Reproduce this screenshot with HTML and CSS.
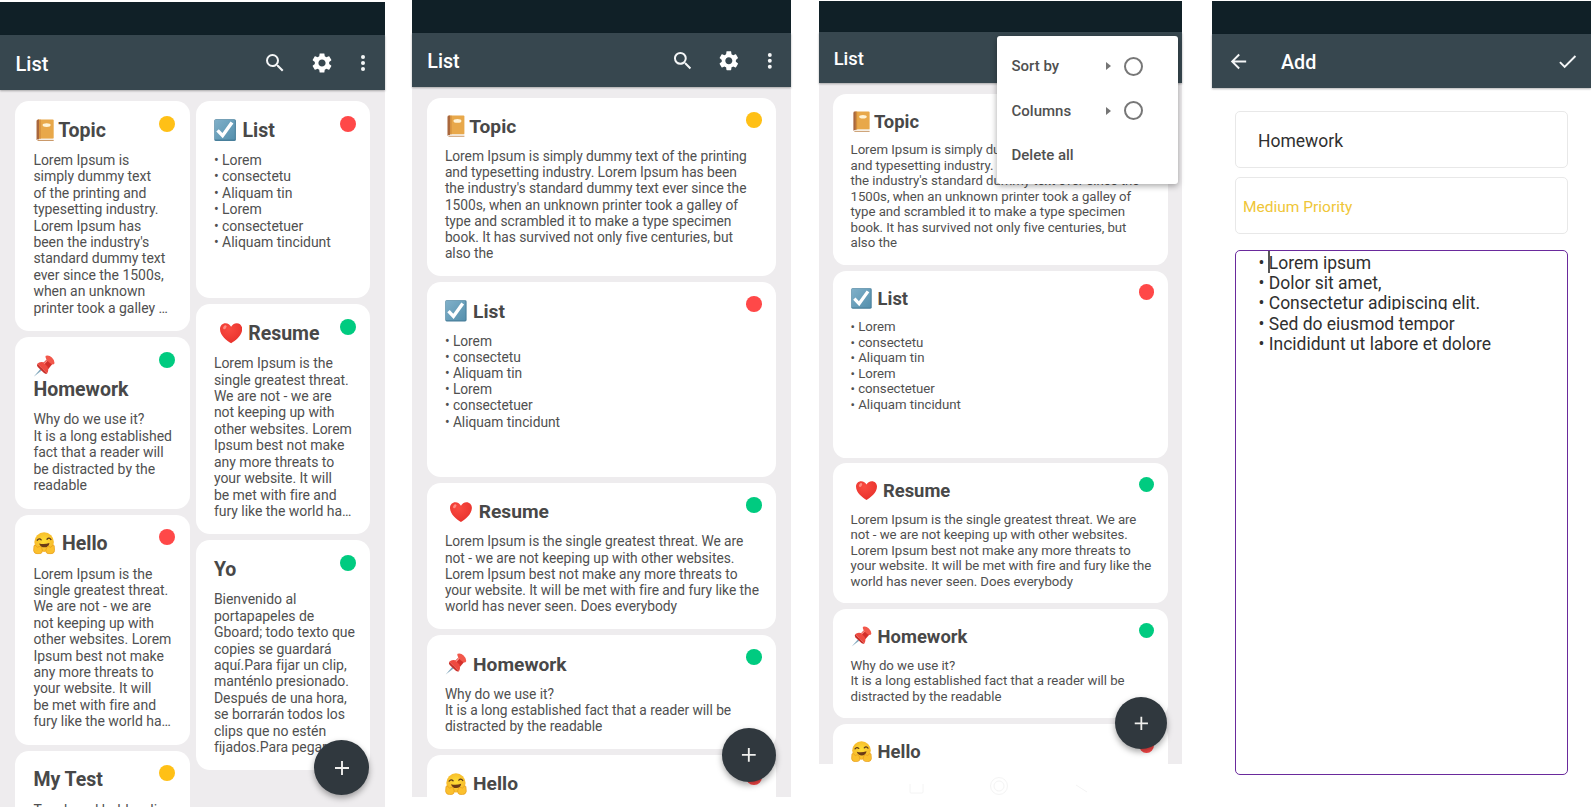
FILE: index.html
```
<!DOCTYPE html>
<html lang="en">
<head>
<meta charset="utf-8">
<title>Notes</title>
<link rel="stylesheet" href="styles.css">
</head>
<body>
<svg class="defs" aria-hidden="true">
<defs>
<linearGradient id="gCheck" x1="0" y1="0" x2="1" y2="1"><stop offset="0" stop-color="#80b0c9"/><stop offset="1" stop-color="#5590ad"/></linearGradient>
<radialGradient id="gFace" cx=".5" cy=".45" r=".6"><stop offset="0" stop-color="#ffdf35"/><stop offset="1" stop-color="#f5b32a"/></radialGradient>
<radialGradient id="gHeart" cx=".4" cy=".3" r=".8"><stop offset="0" stop-color="#fa4b41"/><stop offset="1" stop-color="#e62f2a"/></radialGradient>
</defs>
<symbol id="book" viewBox="0 0 22 22"><path d="M4 .5h14.500q1 0 1 1v17q0 1-1 1H4z" fill="#e8a84a"/><path d="M4 19.500h15.500v1.500H4z" fill="#f5efe6"/><path d="M3.500 21h16v.7h-16z" fill="#b8793a"/><path d="M2.500 2q0-1.500 1.500-1.500h1v19.500q-2.500 0-2.500 1z" fill="#a9673c"/><path d="M5.500 .5h.9v19.200h-.9z" fill="#c98036"/><ellipse cx="12.500" cy="6" rx="4" ry="1.900" fill="#fff3d6"/></symbol>
<symbol id="check" viewBox="0 0 22 22"><rect x=".3" y=".3" width="21.400" height="21.400" rx="1.500" fill="#487f9b"/><rect x=".8" y=".8" width="19.800" height="19.600" rx="1" fill="url(#gCheck)"/><path d="M3.500 11.200l5 5.300L17.800 3.500" fill="none" stroke="#fff" stroke-width="3.400"/></symbol>
<symbol id="heart" viewBox="0 0 22 22"><path d="M11 21C7 18.600 0 13.500 0 6.900 0 3.500 2.500 1.200 5.400 1.200c2.500 0 4.600 1.500 5.600 3.600 1-2.100 3.100-3.600 5.600-3.600 2.900 0 5.400 2.300 5.400 5.700 0 6.600-7 11.700-11 14.100z" fill="url(#gHeart)"/><ellipse cx="4.800" cy="5.200" rx="1.400" ry="2.200" transform="rotate(35 4.800 5.200)" fill="#ff8a80"/></symbol>
<symbol id="pin" viewBox="0 0 22 22"><path d="M8.500 12.500L.7 21.600l9.500-7.400z" fill="#84a9bd"/><path d="M10 8l5-5 5 5-5 6z" fill="#d32f2a"/><path d="M4.300 8.700q2.200-2.300 6-1.400l3.900 4q1.900 3.300-.2 7.100z" fill="#ee4a40"/><path d="M4.300 8.700l9.700 9.700q-1.500.8-3.100-.5L4.700 12q-1.300-1.600-.4-3.300z" fill="#c92d27"/><path d="M12.700.8q3-1.200 6 1.700t2.500 6q-1.500 2.500-5.700-1.500T12.700.8z" fill="#f2584b"/><path d="M11 8.500l3.200-3.200" stroke="#ff9388" stroke-width="1.200"/></symbol>
<symbol id="hug" viewBox="0 0 22 22"><circle cx="11" cy="10" r="9.700" fill="url(#gFace)"/><path d="M4.200 8.200q2-2.500 3.900-.4M13.900 7.200q2-2.300 3.900.3" stroke="#5b3a1a" stroke-width="1.300" fill="none" stroke-linecap="round"/><path d="M6 11.300q5.200 1.300 10.300-.5-.7 4.300-5 4.400-3.800 0-5.300-3.900z" fill="#6b3b16"/><path d="M1 13.500q1-1.200 2 .3l1.500 1.400q3-2 4 .5 1.500 2.200.3 4.800-1.200 1.300-4.300 1.200Q1 21.500.6 18.500zM21 13.500q-1-1.200-2 .3l-1.500 1.400q-3-2-4 .5-1.500 2.200-.3 4.800 1.200 1.300 4.300 1.200 3.500-.2 3.900-3.200z" fill="#fbc02d" stroke="#e59b1c" stroke-width=".7"/></symbol>
<symbol id="search" viewBox="0 0 24 24"><path d="M15.500 14h-.79l-.28-.27A6.471 6.471 0 0 0 16 9.500 6.500 6.500 0 1 0 9.500 16c1.610 0 3.090-.59 4.230-1.570l.27.28v.79l5 4.990L20.490 19l-4.990-5zm-6 0C7.010 14 5 11.990 5 9.500S7.010 5 9.500 5 14 7.010 14 9.500 11.990 14 9.500 14z" fill="#f4f6f7"/></symbol>
<symbol id="gear" viewBox="0 0 24 24"><path d="M19.140 12.940c.04-.3.060-.61.060-.94 0-.32-.02-.64-.07-.94l2.030-1.580c.18-.14.23-.41.120-.61l-1.920-3.320c-.12-.22-.37-.29-.59-.22l-2.390.96c-.5-.38-1.030-.7-1.620-.94l-.36-2.540c-.04-.24-.24-.41-.48-.41h-3.840c-.24 0-.43.17-.47.41l-.36 2.540c-.59.24-1.130.57-1.620.94l-2.390-.96c-.22-.08-.47 0-.59.22L2.740 8.870c-.12.21-.08.47.12.61l2.030 1.580c-.05.3-.09.63-.09.94s.02.64.07.94l-2.030 1.580c-.18.14-.23.41-.12.61l1.920 3.320c.12.220.37.290.59.220l2.390-.96c.5.38 1.030.7 1.620.94l.36 2.540c.05.24.24.410.48.410h3.840c.24 0 .44-.17.47-.41l.36-2.540c.59-.24 1.130-.56 1.620-.94l2.390.96c.22.080.47 0 .59-.22l1.920-3.320c.12-.22.070-.47-.12-.61l-2.010-1.580zM12 15.600c-1.980 0-3.600-1.620-3.600-3.600s1.620-3.600 3.600-3.600 3.600 1.620 3.600 3.600-1.620 3.600-3.600 3.600z" fill="#fff"/></symbol>
<symbol id="more" viewBox="0 0 24 24"><g fill="#f4f6f7"><circle cx="12" cy="6" r="2"/><circle cx="12" cy="12" r="2"/><circle cx="12" cy="18" r="2"/></g></symbol>
<symbol id="plus" viewBox="0 0 24 24"><path d="M12 5v14M5 12h14" stroke="#f0f0ee" stroke-width="1.900"/></symbol>
</svg>

<main class="board">
<section class="phone p1">
  <div class="status"></div>
  <header class="bar"><h1>List</h1><svg class="ic s"><use href="#search"/></svg><svg class="ic g"><use href="#gear"/></svg><svg class="ic m"><use href="#more"/></svg></header>
  <div class="feed two">
    <div class="col">
      <article class="card"><i class="dot amber"></i><h2><svg class="emo bk"><use href="#book"/></svg>Topic</h2><p>Lorem Ipsum is<br>simply dummy text<br>of the printing and<br>typesetting industry.<br>Lorem Ipsum has<br>been the industry's<br>standard dummy text<br>ever since the 1500s,<br>when an unknown<br>printer took a galley …</p></article>
      <article class="card"><i class="dot green"></i><h2><svg class="emo"><use href="#pin"/></svg><br>Homework</h2><p>Why do we use it?<br>It is a long established<br>fact that a reader will<br>be distracted by the<br>readable</p></article>
      <article class="card"><i class="dot red"></i><h2><svg class="emo"><use href="#hug"/></svg> Hello</h2><p>Lorem Ipsum is the<br>single greatest threat.<br>We are not - we are<br>not keeping up with<br>other websites. Lorem<br>Ipsum best not make<br>any more threats to<br>your website. It will<br>be met with fire and<br>fury like the world ha…</p></article>
      <article class="card"><i class="dot amber"></i><h2>My Test</h2><p>Touch and hold a clip</p></article>
    </div>
    <div class="col">
      <article class="card"><i class="dot red"></i><h2><svg class="emo"><use href="#check"/></svg> List</h2><p class="tall">• Lorem<br>• consectetu<br>• Aliquam tin<br>• Lorem<br>• consectetuer<br>• Aliquam tincidunt</p></article>
      <article class="card"><i class="dot green"></i><h2 class="ind"><svg class="emo"><use href="#heart"/></svg> Resume</h2><p>Lorem Ipsum is the<br>single greatest threat.<br>We are not - we are<br>not keeping up with<br>other websites. Lorem<br>Ipsum best not make<br>any more threats to<br>your website. It will<br>be met with fire and<br>fury like the world ha…</p></article>
      <article class="card"><i class="dot green"></i><h2>Yo</h2><p>Bienvenido al<br>portapapeles de<br>Gboard; todo texto que<br>copies se guardará<br>aquí.Para fijar un clip,<br>manténlo presionado.<br>Después de una hora,<br>se borrarán todos los<br>clips que no estén<br>fijados.Para pegar</p></article>
    </div>
  </div>
  <button class="fab"><svg><use href="#plus"/></svg></button>
</section>

<section class="phone p2">
  <div class="status"></div>
  <header class="bar"><h1>List</h1><svg class="ic s"><use href="#search"/></svg><svg class="ic g"><use href="#gear"/></svg><svg class="ic m"><use href="#more"/></svg></header>
  <div class="feed">
    <div class="col">
      <article class="card"><i class="dot amber"></i><h2><svg class="emo bk"><use href="#book"/></svg>Topic</h2><p>Lorem Ipsum is simply dummy text of the printing<br>and typesetting industry. Lorem Ipsum has been<br>the industry's standard dummy text ever since the<br>1500s, when an unknown printer took a galley of<br>type and scrambled it to make a type specimen<br>book. It has survived not only five centuries, but<br>also the</p></article>
      <article class="card"><i class="dot red"></i><h2><svg class="emo"><use href="#check"/></svg> List</h2><p class="tall">• Lorem<br>• consectetu<br>• Aliquam tin<br>• Lorem<br>• consectetuer<br>• Aliquam tincidunt</p></article>
      <article class="card"><i class="dot green"></i><h2 class="ind"><svg class="emo"><use href="#heart"/></svg> Resume</h2><p>Lorem Ipsum is the single greatest threat. We are<br>not - we are not keeping up with other websites.<br>Lorem Ipsum best not make any more threats to<br>your website. It will be met with fire and fury like the<br>world has never seen. Does everybody</p></article>
      <article class="card"><i class="dot green"></i><h2><svg class="emo"><use href="#pin"/></svg> Homework</h2><p>Why do we use it?<br>It is a long established fact that a reader will be<br>distracted by the readable</p></article>
      <article class="card"><i class="dot red"></i><h2><svg class="emo"><use href="#hug"/></svg> Hello</h2></article>
    </div>
  </div>
  <button class="fab"><svg><use href="#plus"/></svg></button>
</section>

<section class="phone p3">
  <div class="status"></div>
  <header class="bar"><h1>List</h1></header>
  <div class="feed">
    <div class="col">
      <article class="card"><h2><svg class="emo bk"><use href="#book"/></svg>Topic</h2><p>Lorem Ipsum is simply dummy text of the printing<br>and typesetting industry. Lorem Ipsum has been<br>the industry's standard dummy text ever since the<br>1500s, when an unknown printer took a galley of<br>type and scrambled it to make a type specimen<br>book. It has survived not only five centuries, but<br>also the</p></article>
      <article class="card"><i class="dot red"></i><h2><svg class="emo"><use href="#check"/></svg> List</h2><p class="tall">• Lorem<br>• consectetu<br>• Aliquam tin<br>• Lorem<br>• consectetuer<br>• Aliquam tincidunt</p></article>
      <article class="card"><i class="dot green"></i><h2 class="ind"><svg class="emo"><use href="#heart"/></svg> Resume</h2><p>Lorem Ipsum is the single greatest threat. We are<br>not - we are not keeping up with other websites.<br>Lorem Ipsum best not make any more threats to<br>your website. It will be met with fire and fury like the<br>world has never seen. Does everybody</p></article>
      <article class="card"><i class="dot green"></i><h2><svg class="emo"><use href="#pin"/></svg> Homework</h2><p>Why do we use it?<br>It is a long established fact that a reader will be<br>distracted by the readable</p></article>
      <article class="card"><i class="dot red"></i><h2><svg class="emo"><use href="#hug"/></svg> Hello</h2></article>
    </div>
  </div>
  <button class="fab"><svg><use href="#plus"/></svg></button>
  <div class="menu">
    <div class="item"><span>Sort by</span><b class="tri"></b><b class="radio"></b></div>
    <div class="item"><span>Columns</span><b class="tri"></b><b class="radio"></b></div>
    <div class="item"><span>Delete all</span></div>
  </div>
  <footer class="nav">
    <svg viewBox="0 0 200 24"><path d="M10 10v8q0 1 1 1h11q1 0 1-1v-8"/><circle cx="99" cy="12" r="8.500"/><circle cx="99" cy="12" r="5"/><path d="M176 11l11 7"/></svg>
  </footer>
</section>

<section class="phone p4">
  <div class="status"></div>
  <header class="bar">
    <svg class="back" viewBox="0 0 24 24"><path d="M20 11H7.830l5.590-5.590L12 4l-8 8 8 8 1.410-1.410L7.830 13H20v-2z" fill="#f4f6f7"/></svg>
    <h1>Add</h1>
    <svg class="ok" viewBox="0 0 24 24"><path d="M9 16.170L4.830 12l-1.420 1.410L9 19 21 7l-1.410-1.410z" fill="#f4f6f7"/></svg>
  </header>
  <form class="form">
    <div class="field name">Homework</div>
    <div class="field prio">Medium Priority</div>
    <div class="area">
      <div class="line">• Lorem ipsum<i class="caret"></i></div>
      <div class="line">• Dolor sit amet,</div>
      <div class="line cut">• Consectetur adipiscing elit.</div>
      <div class="line cut">• Sed do eiusmod tempor</div>
      <div class="line">• Incididunt ut labore et dolore</div>
    </div>
  </form>
</section>
</main>
</body>
</html>
```
FILE: styles.css
```
* { box-sizing: border-box; }
html, body { height: 100%; }
body { margin: 0; background: #fff; font-family: Roboto, "Liberation Sans", sans-serif; overflow: hidden; }
h1, h2, p { margin: 0; }
.defs { position: absolute; width: 0; height: 0; }
.board { display: flex; align-items: flex-start; height: 808px; overflow: hidden; }

.phone { position: relative; flex: none; display: flex; flex-direction: column; }
.p1 { width: 385px; height: 805px; margin-top: 2px; font-size: 10px; }
.p2 { width: 379px; height: 797px; margin-left: 27px; font-size: 9.85px; }
.p3 { width: 363px; height: 807px; margin: 1px 0 0 28px; font-size: 9.45px; }
.p4 { width: 379px; height: 807px; margin: 1px 0 0 30px; font-size: 9.86px; }

.status { flex: none; height: 3.3em; background: #102027; }
.bar { flex: none; display: flex; align-items: center; height: 5.5em; padding: .15em 0 0 1.55em; background: #37474f; box-shadow: 0 1px 2px rgba(0,0,0,.3); position: relative; z-index: 1; }
.bar h1 { flex: 1; padding-top: .05em; font-size: 2em; font-weight: 500; line-height: 1.2; color: #fff; }
.p2 .bar h1, .p4 .bar h1 { padding-top: .13em; }
.ic { width: 2.4em; height: 2.4em; }
.s { margin-right: 2.3em; }
.g { margin-right: 1.75em; }
.m { margin-right: 1em; }
.p2 .m { margin-right: .96em; }
.p3 .bar { height: 5.4em; }
.p3 .bar h1 { font-size: 1.95em; }

.feed { flex: 1; min-height: 0; overflow: hidden; display: flex; gap: .6em; padding: 1.1em 1.5em 0; background: #eeecee; }
.col { flex: 1; min-width: 0; display: flex; flex-direction: column; gap: .6em; }
.card { flex: none; position: relative; padding: 1.77em 0 1.5em 1.84em; border-radius: 1.4em; background: #fff; }
.card h2 { font-size: 1.95em; font-weight: 700; line-height: 1.205; color: #484848; white-space: nowrap; margin-bottom: .52em; }
.card p { font-size: 1.4em; line-height: 1.1725; letter-spacing: -.03px; color: #505050; white-space: nowrap; }
.p1 .card { padding-bottom: 1.51em; }
.p1 .card h2 { margin-bottom: .5em; }
.p2 .card { padding-bottom: 1.52em; }
.p3 .card p { letter-spacing: -.04px; }
.card .tall { min-height: 9.38em; }
.card h2.ind { padding-left: .29em; }
.emo { width: 1.14em; height: 1.14em; margin-right: .08em; vertical-align: -.22em; }
.bk { margin-left: .03em; margin-right: .1em; }
.dot { position: absolute; top: 1.45em; right: 1.45em; width: 1.6em; height: 1.6em; border-radius: 50%; }
.amber { background: #ffc016; }
.red { background: #ff4848; }
.green { background: #00cb80; }

.fab { position: absolute; width: 5.5em; height: 5.5em; padding: 0; border: 0; border-radius: 50%; background: #30383e; box-shadow: 0 3px 6px rgba(0,0,0,.35); font-size: 1em; display: grid; place-items: center; }
.fab svg { width: 2.4em; height: 2.4em; }
.p1 .fab { left: 314px; top: 738px; }
.p2 .fab { left: 310px; top: 728px; }
.p3 .fab { left: 296px; top: 696px; }

.p3 .feed { flex: none; height: 681px; padding-top: 1.13em; }
.menu { position: absolute; z-index: 2; left: 178px; top: 35px; width: 181px; height: 148px; padding: 8px 0 0 14.500px; border-radius: 3px; background: #fff; box-shadow: 0 2px 6px rgba(0,0,0,.35); font-size: 15px; font-weight: 500; color: #505050; }
.item { display: flex; align-items: center; height: 44.500px; }
.item span { flex: none; width: 94px; }
.tri { border: 4px solid transparent; border-left: 5px solid #757575; border-right: 0; }
.radio { width: 19px; height: 19px; margin-left: 13.500px; border: 2px solid #777; border-radius: 50%; }
.nav { flex: 1; display: flex; padding: 10px 0 0 81px; }
.nav svg { width: 200px; height: 24px; fill: none; stroke: #f4f4f4; stroke-width: 1; }

.p4 .bar { padding-left: 15px; }
.back { width: 23px; height: 23px; }
.p4 .bar h1 { padding-left: 31px; }
.ok { width: 23px; height: 23px; margin-right: 12px; }
.form { display: flex; flex-direction: column; padding: 23px 23px 0 23px; }
.field { height: 57.500px; display: flex; align-items: center; border: 1px solid #e8e8e8; border-radius: 5px; color: #303030; }
.name { padding: 2px 0 0 22px; font-size: 17.500px; }
.prio { margin-top: 8.500px; padding: 2px 0 0 7px; font-size: 15.500px; color: #efc638; }
.area { margin-top: 15.500px; height: 525px; padding: 2px 0 0 22.500px; border: 1px solid #6a2a9c; border-radius: 5px; font-size: 17.500px; line-height: 20.300px; color: #303030; }
.line { position: relative; height: 20.300px; }
.cut { height: 17px; margin-bottom: 3.300px; overflow: hidden; }
.caret { position: absolute; left: 9.500px; top: -2px; width: 2px; height: 22px; background: #555; }
```
